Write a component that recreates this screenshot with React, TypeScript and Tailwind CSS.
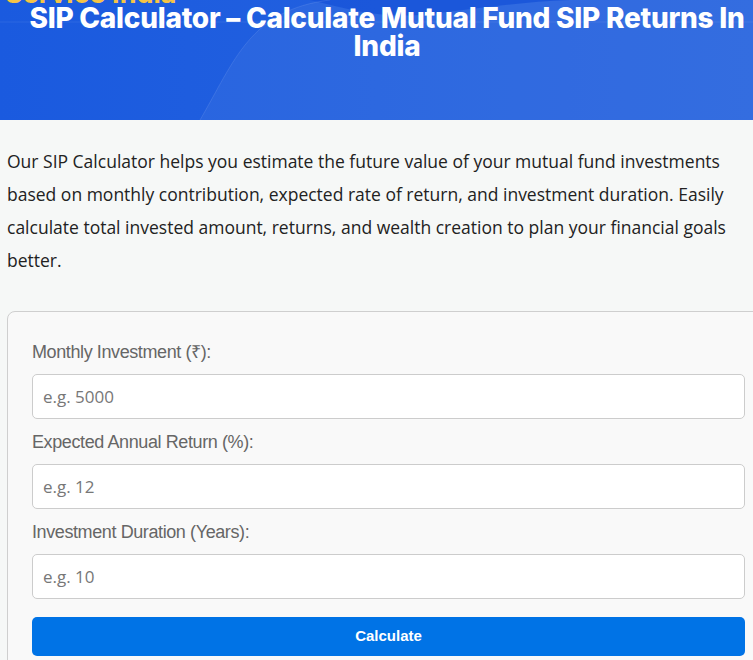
import React from 'react';

function HeaderWaves() {
  return (
    <svg
      className="absolute inset-0 w-full h-full"
      viewBox="0 0 753 120"
      preserveAspectRatio="none"
      aria-hidden="true"
    >
      <defs>
        <linearGradient id="hdr" x1="0" y1="0" x2="1" y2="0">
          <stop offset="0" stopColor="#1a5adf" />
          <stop offset="1" stopColor="#2a66df" />
        </linearGradient>
      </defs>
      <rect width="753" height="120" fill="url(#hdr)" />
      {/* lighter sweep on the right */}
      <path
        d="M200 120 C 235 60, 250 10, 330 0 L 753 0 L 753 120 Z"
        fill="#ffffff"
        fillOpacity="0.05"
      />
      {/* darker bump at the top */}
      <path
        d="M310 0 C 345 8, 380 20, 430 14 C 480 8, 520 2, 570 0 Z"
        fill="#1652d8"
        fillOpacity="0.8"
      />
      <path
        d="M200 120 C 235 60, 250 10, 330 0"
        fill="none"
        stroke="#ffffff"
        strokeOpacity="0.1"
        strokeWidth="1"
      />
      <line x1="0" y1="22" x2="753" y2="22" stroke="#ffffff" strokeOpacity="0.08" strokeWidth="1" />
    </svg>
  );
}

function Field({ label, placeholder }: { label: string; placeholder: string }) {
  return (
    <div className="flex flex-col">
      <label className="text-[18px] leading-[20px] text-[#666] tracking-[-0.4px] font-['Liberation_Sans',Arial,sans-serif] mb-[12px]">
        {label}
      </label>
      <input
        type="number"
        placeholder={placeholder}
        className="h-[45px] w-full bg-white border border-[#ccc] rounded-[5px] px-[10px] text-[17px] font-['Open_Sans',sans-serif] placeholder:text-[#777] outline-none mb-[13px]"
      />
    </div>
  );
}

export default function App() {
  return (
    <div className="min-h-screen w-full overflow-hidden bg-[#f6f8f7] font-['Open_Sans',sans-serif]">
      {/* Header */}
      <header className="relative h-[120px] overflow-hidden">
        <HeaderWaves />
        <div className="relative pl-[21px]">
          <div className="absolute left-[5px] top-[-26px] text-[27px] font-bold text-[#f6c445] font-['Inter',sans-serif]">
            Service India
          </div>
          <h1 className="pt-[4px] text-center text-white text-[28px] leading-[28px] font-extrabold tracking-[-0.25px] font-['Inter',sans-serif]">
            SIP Calculator – Calculate Mutual Fund SIP Returns In India
          </h1>
        </div>
      </header>

      {/* Intro */}
      <p className="px-[7px] pt-[25px] text-[17.5px] leading-[33px] text-[#222]">
        Our SIP Calculator helps you estimate the future value of your mutual fund investments based on monthly
        contribution, expected rate of return, and investment duration. Easily calculate total invested amount,
        returns, and wealth creation to plan your financial goals better.
      </p>

      {/* Card */}
      <div className="ml-[7px] mt-[34px] w-[763px] bg-[#f9f9f9] border border-[#cfcfcf] rounded-[8px] px-[24px] pt-[30px] pb-[20px]">
        <Field label="Monthly Investment (₹):" placeholder="e.g. 5000" />
        <Field label="Expected Annual Return (%):" placeholder="e.g. 12" />
        <Field label="Investment Duration (Years):" placeholder="e.g. 10" />
        <button className="mt-[5px] h-[39px] w-full rounded-[5px] bg-[#0073e6] text-white text-[15px] font-bold font-['Liberation_Sans',Arial,sans-serif]">
          Calculate
        </button>
      </div>
    </div>
  );
}
